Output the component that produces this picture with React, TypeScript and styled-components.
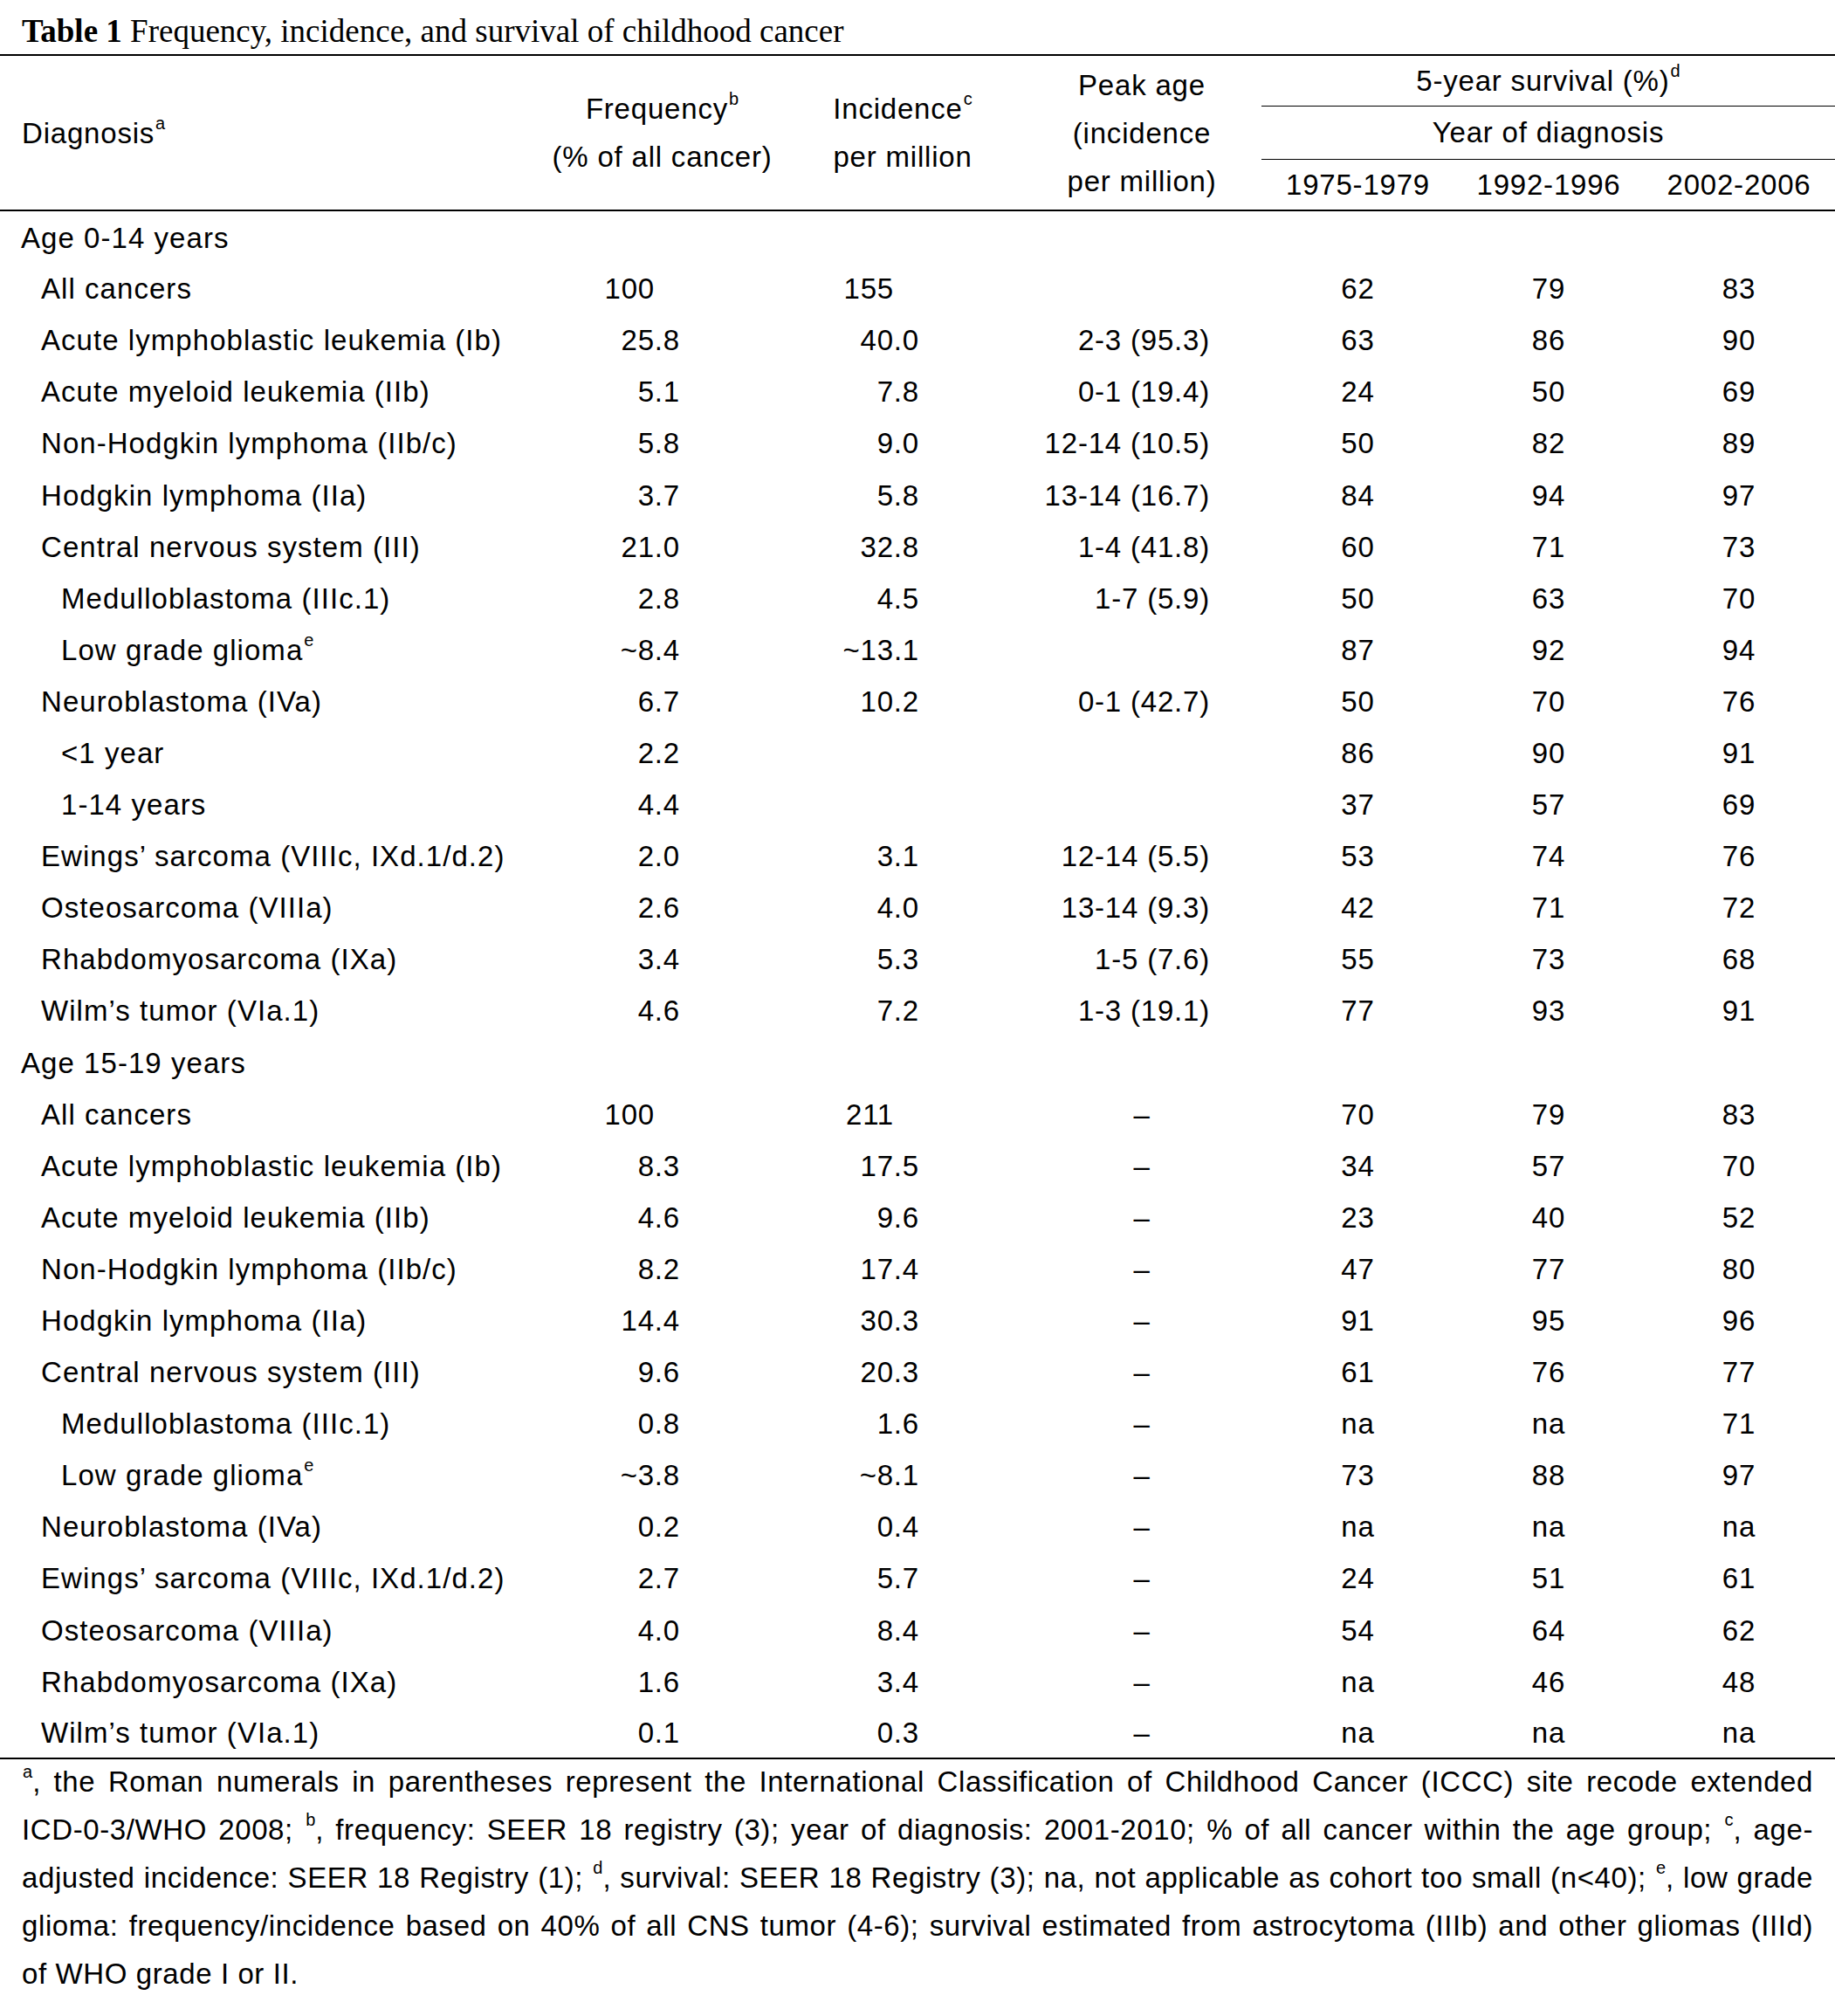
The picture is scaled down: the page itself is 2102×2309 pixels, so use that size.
import React from "react";
import styled, { createGlobalStyle } from "styled-components";

const GlobalStyle = createGlobalStyle`
  html, body { margin: 0; padding: 0; background: #ffffff; }
  body { font-family: "Liberation Sans", Arial, Helvetica, sans-serif; color: #000; }
`;

const Page = styled.div`
  width: 2102px;
  background: #fff;
`;

const Caption = styled.div`
  font-family: "Liberation Serif", "Times New Roman", serif;
  font-size: 37px;
  line-height: 52px;
  padding: 10px 25px 0;
  white-space: nowrap;
`;

const CaptionLabel = styled.b`
  font-weight: 700;
`;

const Table = styled.table`
  width: 2102px;
  border-collapse: collapse;
  table-layout: fixed;
  font-size: 33px;
  letter-spacing: 0.8px;
  border-top: 2px solid #000;
  border-bottom: 2px solid #000;
`;

const Body = styled.tbody`
  letter-spacing: 1.05px;
`;

const HeadRow = styled.tr<{ $h: number }>`
  height: ${(p) => p.$h}px;
`;

const Th = styled.th<{ $align?: "left" | "center"; $rule?: boolean; $last?: boolean }>`
  font-weight: 400;
  padding: 0;
  padding-left: ${(p) => (p.$align === "left" ? "25px" : "0")};
  text-align: ${(p) => p.$align ?? "center"};
  vertical-align: middle;
  line-height: 55px;
  white-space: nowrap;
  border-bottom: ${(p) => (p.$last ? "2px solid #000" : p.$rule ? "1.5px solid #000" : "none")};
`;

const Row = styled.tr`
  height: 59.1px;
`;

const LabelCell = styled.td<{ $level: number }>`
  padding: 2px 0 0 ${(p) => 24 + p.$level * 23}px;
  vertical-align: middle;
  line-height: 1;
  white-space: nowrap;
`;

const NumCell = styled.td`
  padding: 2px 118px 0 0;
  text-align: right;
  vertical-align: middle;
  line-height: 1;
  white-space: nowrap;
  letter-spacing: 0.8px;
`;

const PeakCell = styled.td<{ $dash?: boolean }>`
  padding: 2px ${(p) => (p.$dash ? "0" : "59px")} 0 0;
  text-align: ${(p) => (p.$dash ? "center" : "right")};
  vertical-align: middle;
  line-height: 1;
  white-space: nowrap;
  letter-spacing: 0.8px;
`;

const SurvCell = styled.td`
  padding: 2px 0 0;
  text-align: center;
  vertical-align: middle;
  line-height: 1;
  letter-spacing: 0.8px;
`;

const IntNum = styled.span`
  padding-right: 29px;
`;

const Sup = styled.span`
  font-size: 20px;
  position: relative;
  top: -0.8em;
  line-height: 0;
  margin-left: 1px;
  letter-spacing: 0;
`;

const Notes = styled.div`
  font-size: 33px;
  letter-spacing: 0.6px;
  line-height: 55px;
  padding: 0 25px 20px;
  margin-top: -2px;
`;

const NoteLine = styled.span<{ $last?: boolean }>`
  display: block;
  text-align: justify;
  text-align-last: ${(p) => (p.$last ? "left" : "justify")};
  white-space: nowrap;
`;

type Item = {
  label: React.ReactNode;
  level: number;
  freq?: string;
  inc?: string;
  peak?: string;
  s: [string, string, string] | null;
  group?: boolean;
};

const lgg = (
  <>
    Low grade glioma<Sup>e</Sup>
  </>
);

const rows: Item[] = [
  { label: "Age 0-14 years", level: 0, s: null, group: true },
  { label: "All cancers", level: 1, freq: "100", inc: "155", peak: "", s: ["62", "79", "83"] },
  { label: "Acute lymphoblastic leukemia (Ib)", level: 1, freq: "25.8", inc: "40.0", peak: "2-3 (95.3)", s: ["63", "86", "90"] },
  { label: "Acute myeloid leukemia (IIb)", level: 1, freq: "5.1", inc: "7.8", peak: "0-1 (19.4)", s: ["24", "50", "69"] },
  { label: "Non-Hodgkin lymphoma (IIb/c)", level: 1, freq: "5.8", inc: "9.0", peak: "12-14 (10.5)", s: ["50", "82", "89"] },
  { label: "Hodgkin lymphoma (IIa)", level: 1, freq: "3.7", inc: "5.8", peak: "13-14 (16.7)", s: ["84", "94", "97"] },
  { label: "Central nervous system (III)", level: 1, freq: "21.0", inc: "32.8", peak: "1-4 (41.8)", s: ["60", "71", "73"] },
  { label: "Medulloblastoma (IIIc.1)", level: 2, freq: "2.8", inc: "4.5", peak: "1-7 (5.9)", s: ["50", "63", "70"] },
  { label: lgg, level: 2, freq: "~8.4", inc: "~13.1", peak: "", s: ["87", "92", "94"] },
  { label: "Neuroblastoma (IVa)", level: 1, freq: "6.7", inc: "10.2", peak: "0-1 (42.7)", s: ["50", "70", "76"] },
  { label: "<1 year", level: 2, freq: "2.2", inc: "", peak: "", s: ["86", "90", "91"] },
  { label: "1-14 years", level: 2, freq: "4.4", inc: "", peak: "", s: ["37", "57", "69"] },
  { label: "Ewings\u2019 sarcoma (VIIIc, IXd.1/d.2)", level: 1, freq: "2.0", inc: "3.1", peak: "12-14 (5.5)", s: ["53", "74", "76"] },
  { label: "Osteosarcoma (VIIIa)", level: 1, freq: "2.6", inc: "4.0", peak: "13-14 (9.3)", s: ["42", "71", "72"] },
  { label: "Rhabdomyosarcoma (IXa)", level: 1, freq: "3.4", inc: "5.3", peak: "1-5 (7.6)", s: ["55", "73", "68"] },
  { label: "Wilm\u2019s tumor (VIa.1)", level: 1, freq: "4.6", inc: "7.2", peak: "1-3 (19.1)", s: ["77", "93", "91"] },
  { label: "Age 15-19 years", level: 0, s: null, group: true },
  { label: "All cancers", level: 1, freq: "100", inc: "211", peak: "\u2013", s: ["70", "79", "83"] },
  { label: "Acute lymphoblastic leukemia (Ib)", level: 1, freq: "8.3", inc: "17.5", peak: "\u2013", s: ["34", "57", "70"] },
  { label: "Acute myeloid leukemia (IIb)", level: 1, freq: "4.6", inc: "9.6", peak: "\u2013", s: ["23", "40", "52"] },
  { label: "Non-Hodgkin lymphoma (IIb/c)", level: 1, freq: "8.2", inc: "17.4", peak: "\u2013", s: ["47", "77", "80"] },
  { label: "Hodgkin lymphoma (IIa)", level: 1, freq: "14.4", inc: "30.3", peak: "\u2013", s: ["91", "95", "96"] },
  { label: "Central nervous system (III)", level: 1, freq: "9.6", inc: "20.3", peak: "\u2013", s: ["61", "76", "77"] },
  { label: "Medulloblastoma (IIIc.1)", level: 2, freq: "0.8", inc: "1.6", peak: "\u2013", s: ["na", "na", "71"] },
  { label: lgg, level: 2, freq: "~3.8", inc: "~8.1", peak: "\u2013", s: ["73", "88", "97"] },
  { label: "Neuroblastoma (IVa)", level: 1, freq: "0.2", inc: "0.4", peak: "\u2013", s: ["na", "na", "na"] },
  { label: "Ewings\u2019 sarcoma (VIIIc, IXd.1/d.2)", level: 1, freq: "2.7", inc: "5.7", peak: "\u2013", s: ["24", "51", "61"] },
  { label: "Osteosarcoma (VIIIa)", level: 1, freq: "4.0", inc: "8.4", peak: "\u2013", s: ["54", "64", "62"] },
  { label: "Rhabdomyosarcoma (IXa)", level: 1, freq: "1.6", inc: "3.4", peak: "\u2013", s: ["na", "46", "48"] },
  { label: "Wilm\u2019s tumor (VIa.1)", level: 1, freq: "0.1", inc: "0.3", peak: "\u2013", s: ["na", "na", "na"] },
];

const Num: React.FC<{ v?: string }> = ({ v }) => {
  if (!v) return null;
  if (!v.includes(".")) return <IntNum>{v}</IntNum>;
  return <>{v}</>;
};

export default function App() {
  return (
    <Page>
      <GlobalStyle />
      <Caption>
        <CaptionLabel>Table 1</CaptionLabel> Frequency, incidence, and survival of childhood cancer
      </Caption>
      <Table>
        <colgroup>
          <col style={{ width: 620 }} />
          <col style={{ width: 277 }} />
          <col style={{ width: 274 }} />
          <col style={{ width: 274 }} />
          <col style={{ width: 221 }} />
          <col style={{ width: 216 }} />
          <col style={{ width: 220 }} />
        </colgroup>
        <thead>
          <HeadRow $h={58.5}>
            <Th $align="left" rowSpan={3} $last>
              Diagnosis<Sup>a</Sup>
            </Th>
            <Th rowSpan={3} $last>
              Frequency<Sup>b</Sup>
              <br />
              (% of all cancer)
            </Th>
            <Th rowSpan={3} $last>
              Incidence<Sup>c</Sup>
              <br />
              per million
            </Th>
            <Th rowSpan={3} $last>
              Peak age
              <br />
              (incidence
              <br />
              per million)
            </Th>
            <Th colSpan={3} $rule>
              5-year survival (%)<Sup>d</Sup>
            </Th>
          </HeadRow>
          <HeadRow $h={60.5}>
            <Th colSpan={3} $rule>
              Year of diagnosis
            </Th>
          </HeadRow>
          <HeadRow $h={59}>
            <Th $last>1975-1979</Th>
            <Th $last>1992-1996</Th>
            <Th $last>2002-2006</Th>
          </HeadRow>
        </thead>
        <Body>
          {rows.map((r, i) =>
            r.group ? (
              <Row key={i}>
                <LabelCell $level={0} colSpan={7}>
                  {r.label}
                </LabelCell>
              </Row>
            ) : (
              <Row key={i}>
                <LabelCell $level={r.level}>{r.label}</LabelCell>
                <NumCell>
                  <Num v={r.freq} />
                </NumCell>
                <NumCell>
                  <Num v={r.inc} />
                </NumCell>
                <PeakCell $dash={r.peak === "\u2013"}>{r.peak}</PeakCell>
                <SurvCell>{r.s?.[0]}</SurvCell>
                <SurvCell>{r.s?.[1]}</SurvCell>
                <SurvCell>{r.s?.[2]}</SurvCell>
              </Row>
            )
          )}
        </Body>
      </Table>
      <Notes>
        <NoteLine>
          <Sup>a</Sup>, the Roman numerals in parentheses represent the International Classification of Childhood
          Cancer (ICCC) site recode extended
        </NoteLine>
        <NoteLine>
          ICD-0-3/WHO 2008; <Sup>b</Sup>, frequency: SEER 18 registry (3); year of diagnosis: 2001-2010; % of all
          cancer within the age group; <Sup>c</Sup>, age-
        </NoteLine>
        <NoteLine>
          adjusted incidence: SEER 18 Registry (1); <Sup>d</Sup>, survival: SEER 18 Registry (3); na, not applicable
          as cohort too small (n&lt;40); <Sup>e</Sup>, low grade
        </NoteLine>
        <NoteLine>
          glioma: frequency/incidence based on 40% of all CNS tumor (4-6); survival estimated from astrocytoma (IIIb)
          and other gliomas (IIId)
        </NoteLine>
        <NoteLine $last>of WHO grade I or II.</NoteLine>
      </Notes>
    </Page>
  );
}
